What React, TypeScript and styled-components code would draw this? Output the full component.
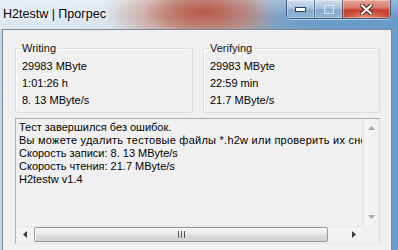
import React from 'react';
import styled, { createGlobalStyle } from 'styled-components';

const Global = createGlobalStyle`
  html, body { margin: 0; padding: 0; background: #f0f0f0; }
  body { width: 398px; height: 250px; overflow: hidden; }
`;

const Window = styled.div`
  width: 398px;
  height: 250px;
  display: flex;
  flex-direction: column;
  overflow: hidden;
  font-family: "Liberation Sans", Arial, sans-serif;
`;

const TitleBar = styled.div`
  height: 29px;
  flex: none;
  display: flex;
  justify-content: space-between;
  align-items: flex-start;
  background:
    radial-gradient(ellipse 62px 24px at 205px 12px, rgba(182, 92, 76, 1), rgba(182, 92, 76, 0) 100%),
    radial-gradient(ellipse 90px 34px at 190px 14px, rgba(196, 128, 112, 0.85), rgba(196, 128, 112, 0) 100%),
    linear-gradient(180deg, rgba(255, 255, 255, 0.3), rgba(255, 255, 255, 0) 60%),
    linear-gradient(90deg, #dce8f1 0%, #d9e6f0 28%, #d3cfd2 38%, #a9a3ab 62%, #7aa2c7 70%, #6b9bc7 80%, #6a9ac8 100%);
`;

const Title = styled.div`
  padding: 6px 0 0 3px;
  font-family: "Liberation Sans", Arial, sans-serif;
  font-size: 12.5px;
  line-height: 16px;
  color: #000;
  text-shadow: 0 0 6px rgba(255, 255, 255, 0.9), 0 0 3px rgba(255, 255, 255, 0.8);
`;

const Controls = styled.div`
  display: flex;
  margin-right: 7px;
  height: 18px;
  border: 1px solid rgba(45, 65, 95, 0.75);
  border-top: none;
  border-radius: 0 0 5px 5px;
  overflow: hidden;
  box-shadow: 0 1px 0 rgba(255, 255, 255, 0.5);
`;

const CtlButton = styled.div<{ $w: number; $close?: boolean }>`
  width: ${(p) => p.$w}px;
  height: 18px;
  display: flex;
  align-items: center;
  justify-content: center;
  & + & { border-left: 1px solid rgba(45, 65, 95, 0.6); }
  background: ${(p) =>
    p.$close
      ? 'radial-gradient(ellipse 22px 8px at 50% 100%, rgba(240,150,110,0.9), rgba(240,150,110,0) 100%), linear-gradient(180deg, #e3a395 0%, #d6786a 45%, #c6402f 55%, #c9503c 100%)'
      : 'linear-gradient(180deg, rgba(225,236,246,0.75) 0%, rgba(190,210,230,0.6) 45%, rgba(140,172,205,0.55) 55%, rgba(160,195,225,0.65) 100%)'};
  box-shadow: inset 0 0 0 1px rgba(255, 255, 255, 0.35);
`;

const Frame = styled.div`
  flex: 1;
  display: flex;
  padding: 0 6px 0 2px;
  background: linear-gradient(90deg, #c2d8ec 0, #c2d8ec 50%, #73a1cc 50%, #6e9dca 100%);
  min-height: 0;
`;

const Client = styled.div`
  flex: 1;
  border: 1px solid #7c8a98;
  border-bottom: none;
  background: #f0f0f0;
  padding: 18px 11px 0 12px;
  display: flex;
  flex-direction: column;
  gap: 5px;
`;

const Groups = styled.div`
  display: grid;
  grid-template-columns: 178px 177px;
  gap: 10px;
`;

const GroupBox = styled.div`
  position: relative;
  height: 65px;
  box-sizing: border-box;
  border: 1px solid #d5dfe5;
  border-radius: 3px;
  box-shadow: inset 1px 1px 0 #ffffff;
  padding: 9px 6px 3px 6px;
`;

const Legend = styled.span`
  position: absolute;
  top: -7px;
  left: 5px;
  padding: 0 2px 0 1px;
  background: #f0f0f0;
  font-size: 11px;
  line-height: 13px;
  color: #111;
`;

const Row = styled.div`
  font-size: 11px;
  line-height: 17px;
  color: #000;
  white-space: nowrap;
`;

const LogBox = styled.div`
  height: 126px;
  box-sizing: border-box;
  border: 1px solid #abadb3;
  border-right-color: #dbdfe6;
  border-bottom-color: #e3e9ef;
  display: grid;
  grid-template-columns: 346px 17px;
  grid-template-rows: 107px 17px;
  background: #f0f0f0;
`;

const LogText = styled.div`
  overflow: hidden;
  padding: 2px 0 0 3px;
`;

const LogLine = styled.div<{ $wide?: boolean }>`
  font-size: 11px;
  line-height: 13px;
  color: #000;
  white-space: nowrap;
  letter-spacing: ${(p) => (p.$wide ? '0.25px' : '0')};
`;

const VScroll = styled.div`
  display: flex;
  flex-direction: column;
  justify-content: space-between;
  align-items: center;
  background: linear-gradient(90deg, #e6e6e6 0, #f4f4f4 2px, #f0f0f0 100%);
  border-left: 1px solid #e2e2e2;
  padding: 7px 0 7px 0;
  box-sizing: border-box;
`;

const HScroll = styled.div`
  display: flex;
  align-items: center;
  background: linear-gradient(180deg, #e6e6e6 0, #f4f4f4 2px, #f0f0f0 100%);
`;

const ArrowCell = styled.div<{ $w: number }>`
  width: ${(p) => p.$w}px;
  height: 17px;
  flex: none;
  display: flex;
  align-items: center;
  justify-content: center;
`;

const Track = styled.div`
  flex: 1;
  height: 17px;
  display: flex;
  align-items: center;
  padding-left: 1px;
`;

const Thumb = styled.div`
  width: 294px;
  height: 15px;
  box-sizing: border-box;
  border: 1px solid #979797;
  border-radius: 2px;
  background: linear-gradient(180deg, #f6f6f6 0%, #ececec 45%, #dcdcdc 55%, #d2d2d2 100%);
  box-shadow: inset 0 1px 0 #ffffff, inset 1px 0 0 #fafafa;
  display: flex;
  align-items: center;
  justify-content: center;
`;

const Corner = styled.div`
  background: #f0f0f0;
`;

const MinIcon = () => (
  <svg width="11" height="6" viewBox="0 0 11 6">
    <rect x="0.5" y="1.5" width="10" height="4" fill="#fff" stroke="#2c3e55" strokeWidth="1" />
  </svg>
);

const MaxIcon = () => (
  <svg width="10" height="9" viewBox="0 0 10 9">
    <rect x="0.5" y="0.5" width="9" height="8" fill="none" stroke="rgba(225,235,245,0.85)" strokeWidth="1" />
    <rect x="2" y="3" width="6" height="4" fill="none" stroke="rgba(170,195,220,0.8)" strokeWidth="1" />
  </svg>
);

const CloseIcon = () => (
  <svg width="13" height="11" viewBox="0 0 13 11">
    <path d="M2 1.5 L11 9.5 M11 1.5 L2 9.5" stroke="#4a1e18" strokeWidth="4" strokeLinecap="square" />
    <path d="M2 1.5 L11 9.5 M11 1.5 L2 9.5" stroke="#ffffff" strokeWidth="2.2" strokeLinecap="square" />
  </svg>
);

const Tri = ({ dir, color }: { dir: 'up' | 'down' | 'left' | 'right'; color: string }) => {
  const paths: Record<string, string> = {
    up: 'M0 4 L3.5 0 L7 4 Z',
    down: 'M0 0 L7 0 L3.5 4 Z',
    left: 'M4 0 L4 7 L0 3.5 Z',
    right: 'M0 0 L4 3.5 L0 7 Z',
  };
  const vertical = dir === 'up' || dir === 'down';
  return (
    <svg width={vertical ? 7 : 4} height={vertical ? 4 : 7} viewBox={vertical ? '0 0 7 4' : '0 0 4 7'}>
      <path d={paths[dir]} fill={color} />
    </svg>
  );
};

const Grip = () => (
  <svg width="7" height="7" viewBox="0 0 7 7">
    <path d="M0.5 0 V7 M3.5 0 V7 M6.5 0 V7" stroke="#555" strokeWidth="1" />
  </svg>
);

const writing = ['29983 MByte', '1:01:26 h', '8. 13 MByte/s'];
const verifying = ['29983 MByte', '22:59 min', '21.7 MByte/s'];
const log = [
  'Тест завершился без ошибок.',
  'Вы можете удалить тестовые файлы *.h2w или проверить их снова',
  'Скорость записи: 8. 13 MByte/s',
  'Скорость чтения: 21.7 MByte/s',
  'H2testw v1.4',
];

export default function App() {
  return (
    <>
      <Global />
      <Window>
        <TitleBar>
          <Title>H2testw | Прогрес</Title>
          <Controls>
            <CtlButton $w={27}>
              <MinIcon />
            </CtlButton>
            <CtlButton $w={27}>
              <MaxIcon />
            </CtlButton>
            <CtlButton $w={47} $close>
              <CloseIcon />
            </CtlButton>
          </Controls>
        </TitleBar>
        <Frame>
          <Client>
            <Groups>
              <GroupBox>
                <Legend>Writing</Legend>
                {writing.map((t) => (
                  <Row key={t}>{t}</Row>
                ))}
              </GroupBox>
              <GroupBox>
                <Legend>Verifying</Legend>
                {verifying.map((t) => (
                  <Row key={t}>{t}</Row>
                ))}
              </GroupBox>
            </Groups>
            <LogBox>
              <LogText>
                {log.map((t, i) => (
                  <LogLine key={t} $wide={i === 1}>
                    {t}
                  </LogLine>
                ))}
              </LogText>
              <VScroll>
                <Tri dir="up" color="#a8a8a8" />
                <Tri dir="down" color="#a8a8a8" />
              </VScroll>
              <HScroll>
                <ArrowCell $w={17}>
                  <Tri dir="left" color="#3c3c3c" />
                </ArrowCell>
                <Track>
                  <Thumb>
                    <Grip />
                  </Thumb>
                </Track>
                <ArrowCell $w={17}>
                  <Tri dir="right" color="#3c3c3c" />
                </ArrowCell>
              </HScroll>
              <Corner />
            </LogBox>
          </Client>
        </Frame>
      </Window>
    </>
  );
}
